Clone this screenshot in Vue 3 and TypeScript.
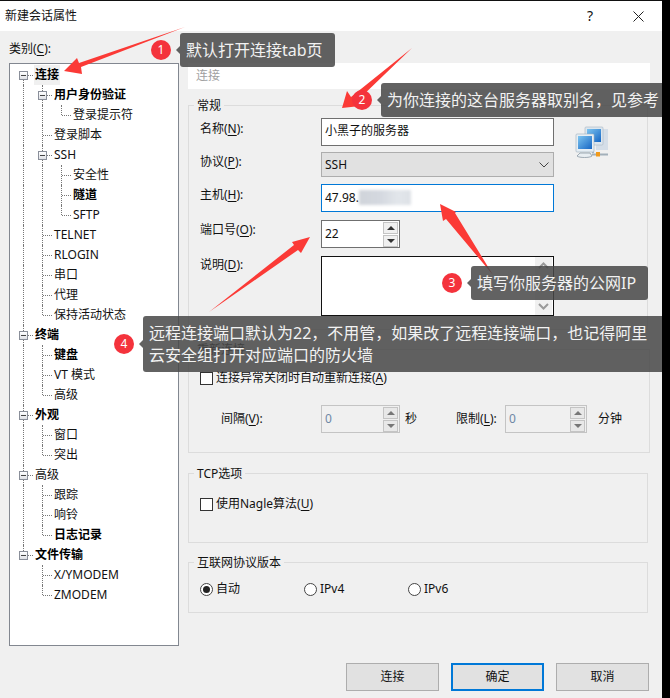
<script setup lang="ts">
interface TreeItem { label: string; level: number; bold?: boolean; open?: boolean; selected?: boolean }

const items: TreeItem[] = [
  { label: '连接', level: 0, bold: true, open: true, selected: true },
  { label: '用户身份验证', level: 1, bold: true, open: true },
  { label: '登录提示符', level: 2 },
  { label: '登录脚本', level: 1 },
  { label: 'SSH', level: 1, open: true },
  { label: '安全性', level: 2 },
  { label: '隧道', level: 2, bold: true },
  { label: 'SFTP', level: 2 },
  { label: 'TELNET', level: 1 },
  { label: 'RLOGIN', level: 1 },
  { label: '串口', level: 1 },
  { label: '代理', level: 1 },
  { label: '保持活动状态', level: 1 },
  { label: '终端', level: 0, bold: true, open: true },
  { label: '键盘', level: 1, bold: true },
  { label: 'VT 模式', level: 1 },
  { label: '高级', level: 1 },
  { label: '外观', level: 0, bold: true, open: true },
  { label: '窗口', level: 1 },
  { label: '突出', level: 1 },
  { label: '高级', level: 0, open: true },
  { label: '跟踪', level: 1 },
  { label: '响铃', level: 1 },
  { label: '日志记录', level: 1, bold: true },
  { label: '文件传输', level: 0, bold: true, open: true },
  { label: 'X/YMODEM', level: 1 },
  { label: 'ZMODEM', level: 1 },
]

// Is there a later sibling at this level, before the branch closes?
function hasNext(index: number, level: number): boolean {
  for (let i = index + 1; i < items.length; i++) {
    if (items[i].level < level) return false
    if (items[i].level === level) return true
  }
  return false
}

function cells(index: number) {
  const item = items[index]
  const out: { cls: string; exp: boolean }[] = []
  for (let l = 0; l <= item.level; l++) {
    if (l < item.level) {
      out.push({ cls: hasNext(index, l) ? 'pass' : 'none', exp: false })
    } else if (l === 0) {
      out.push({ cls: index === 0 ? 'rootfirst' : hasNext(index, 0) ? 'branch' : 'last', exp: !!item.open })
    } else {
      out.push({ cls: hasNext(index, l) ? 'branch' : 'last', exp: !!item.open })
    }
  }
  return out
}
</script>

<template>
  <div class="window">
    <header class="titlebar">
      <span class="title">新建会话属性</span>
      <span class="help">?</span>
      <svg class="close" width="11" height="11" viewBox="0 0 11 11">
        <path d="M.5.5l10 10M10.5.5l-10 10" stroke="#222" stroke-width="1" fill="none" />
      </svg>
    </header>

    <div class="body">
      <aside class="left">
        <div class="cat">类别(<u>C</u>):</div>
        <div class="tree">
          <div v-for="(item, i) in items" :key="i" class="row">
            <span v-for="(c, j) in cells(i)" :key="j" class="cell" :class="c.cls">
              <i v-if="c.exp" class="exp"></i>
            </span>
            <span class="node" :class="{ b: item.bold, sel: item.selected }">{{ item.label }}</span>
          </div>
        </div>
      </aside>

      <main class="right">
        <div class="band">连接</div>

        <fieldset class="g g1">
          <legend>常规</legend>
          <div class="form">
            <label class="lb">名称(<u>N</u>):</label>
            <div class="ctl text">小黑子的服务器</div>
            <svg class="netico" width="36" height="36" viewBox="0 0 36 36">
              <defs>
                <linearGradient id="scr" x1="0" y1="0" x2="1" y2="1">
                  <stop offset="0" stop-color="#7cc4f0" />
                  <stop offset="1" stop-color="#1666c4" />
                </linearGradient>
              </defs>
              <rect x="21" y="3" width="12" height="21" fill="#d5dee8" />
              <rect x="10" y="1" width="18" height="18" rx="1" fill="#dce6ee" stroke="#a9b7c4" stroke-width=".6" />
              <rect x="12" y="3" width="14" height="13" fill="url(#scr)" />
              <path d="M18 19l0 8" stroke="#a9b7c4" stroke-width="2" />
              <rect x="1" y="8" width="18" height="18" rx="1" fill="#e6eef4" stroke="#9fb0be" stroke-width=".6" />
              <rect x="3" y="10" width="14" height="13" fill="url(#scr)" />
              <path d="M5 27h10l2 3c-2 2-13 2-15 0z" fill="#e8eef2" stroke="#8b99a5" stroke-width=".8" />
              <path d="M17 28.500h16" stroke="#a3b0ba" stroke-width="2" />
              <rect x="21" y="26" width="4" height="4.500" fill="#f09a1c" />
            </svg>

            <label class="lb up">协议(<u>P</u>):</label>
            <div class="ctl combo">
              <span>SSH</span>
              <svg width="10" height="6" viewBox="0 0 10 6"><path d="M.5.500L5 5l4.500-4.500" stroke="#444" fill="none" /></svg>
            </div>

            <label class="lb down">主机(<u>H</u>):</label>
            <div class="ctl text focus">47.98.<span class="mask"></span></div>

            <label class="lb up">端口号(<u>O</u>):</label>
            <div class="spin port">
              <span class="val">22</span>
              <span class="arrows">
                <b><i class="tu"></i></b>
                <b><i class="td"></i></b>
              </span>
            </div>

            <label class="lb desc">说明(<u>D</u>):</label>
            <div class="ctl area">
              <div class="sb">
                <svg width="11" height="7" viewBox="0 0 11 7"><path d="M1 6l4.500-4.500L10 6" stroke="#9a9a9a" stroke-width="2" fill="none" /></svg>
                <svg width="11" height="7" viewBox="0 0 11 7"><path d="M1 1l4.500 4.500L10 1" stroke="#9a9a9a" stroke-width="2" fill="none" /></svg>
              </div>
            </div>
          </div>
        </fieldset>

        <fieldset class="g g2">
          <legend>重新连接</legend>
          <div class="check first"><i class="box"></i><span>连接异常关闭时自动重新连接(<u>A</u>)</span></div>
          <div class="interval">
            <label class="il">间隔(<u>V</u>):</label>
            <div class="spin off">
              <span class="val">0</span>
              <span class="arrows"><b><i class="tu"></i></b><b><i class="td"></i></b></span>
            </div>
            <span class="unit">秒</span>
            <label class="lim">限制(<u>L</u>):</label>
            <div class="spin off wide">
              <span class="val">0</span>
              <span class="arrows"><b><i class="tu"></i></b><b><i class="td"></i></b></span>
            </div>
            <span class="unit u2">分钟</span>
          </div>
        </fieldset>

        <fieldset class="g g3">
          <legend>TCP选项</legend>
          <div class="check"><i class="box"></i><span>使用Nagle算法(<u>U</u>)</span></div>
        </fieldset>

        <fieldset class="g g4">
          <legend>互联网协议版本</legend>
          <div class="radios">
            <div class="radio"><i class="dot on"></i><span>自动</span></div>
            <div class="radio"><i class="dot"></i><span>IPv4</span></div>
            <div class="radio"><i class="dot"></i><span>IPv6</span></div>
          </div>
        </fieldset>

        <footer class="foot">
          <button class="btn">连接</button>
          <button class="btn primary">确定</button>
          <button class="btn">取消</button>
        </footer>
      </main>
    </div>

    <svg class="arrows-layer" width="662" height="698" viewBox="0 0 662 698">
      <g fill="#fb3a36">
        <polygon points="185,27 79,63 77,58 64,71 82,74 81,67" />
        <polygon points="412,48 351,97 347,91 342,108 360,106 357,101" />
        <polygon points="493,275 455,213 456,212 440,204 443,221 446,219" />
        <polygon points="209,312 294,245 292,242 310,237 301,253 298,250" />
      </g>
    </svg>

    <div class="note n1"><span class="num">1</span><div class="tip">默认打开连接tab页</div></div>
    <div class="note n2"><span class="num">2</span><div class="tip">为你连接的这台服务器取别名，见参考</div></div>
    <div class="note n3"><span class="num">3</span><div class="tip">填写你服务器的公网IP</div></div>
    <div class="note n4">
      <span class="num">4</span>
      <div class="tip">远程连接端口默认为22，不用管，如果改了远程连接端口，也记得阿里<br />云安全组打开对应端口的防火墙</div>
    </div>
  </div>
</template>

<style>
html, body { margin: 0; background: #000; overflow: hidden; }
</style>

<style scoped>
.window {
  position: relative;
  width: 662px;
  height: 698px;
  overflow: hidden;
  background: #f0f0f0;
  color: #111;
  font: 12px/20px "Noto Sans", "Noto Sans CJK SC", sans-serif;
}
u { text-underline-offset: 2px; }
i { display: block; font-style: normal; }

.titlebar {
  display: flex;
  align-items: center;
  height: 30px;
  padding-left: 5px;
  background: #fff;
  border-top: 1px solid #111;
}
.title { flex: 1; }
.help { font-size: 14px; margin-right: 40px; }
.close { margin-right: 18px; }

.body {
  display: grid;
  grid-template-columns: 170px 462px;
  column-gap: 9px;
  padding: 8px 0 0 9px;
}
.cat { height: 20px; margin-bottom: 4px; }
.tree {
  box-sizing: border-box;
  height: 583px;
  padding-top: 1px;
  background: #fff;
  border: 1px solid #828790;
}
.row { display: flex; height: 20px; }
.cell { position: relative; flex: none; width: 19px; height: 20px; }
.cell::before, .cell::after { content: ""; position: absolute; }
.pass::before, .branch::before { left: 13px; top: 0; height: 20px; border-left: 1px dotted #777; }
.rootfirst::before { left: 13px; top: 10px; height: 10px; border-left: 1px dotted #777; }
.last::before { left: 13px; top: 0; height: 10px; border-left: 1px dotted #777; }
.branch::after, .last::after, .rootfirst::after {
  left: 14px; top: 10px; width: 9px; border-top: 1px dotted #777;
}
.none::before { display: none; }
.exp {
  position: absolute;
  z-index: 1;
  left: 9px;
  top: 6px;
  box-sizing: border-box;
  width: 9px;
  height: 9px;
  border: 1px solid #8a8f9a;
  background: linear-gradient(#fff, #dfe1e6);
}
.exp::after {
  content: "";
  position: absolute;
  left: 1px;
  top: 3px;
  width: 5px;
  height: 1px;
  background: #444;
}
.node { margin-left: 5px; padding: 0 1px; height: 20px; white-space: nowrap; }
.b { font-weight: 700; color: #000; }
.sel { background: #f0f0f0; }

.right { margin-top: 24px; }
.band {
  box-sizing: border-box;
  height: 26px;
  padding-left: 8px;
  line-height: 26px;
  background: #fff;
  color: #a0a0a0;
  margin-bottom: 6px;
}

.g {
  box-sizing: border-box;
  width: 460px;
  margin: 0;
  padding: 0;
  border: 1px solid #dcdcdc;
}
.g legend { margin-left: 5px; padding: 0 3px; line-height: 22px; height: 20px; }
.g1 { height: 235px; margin-bottom: 9px; }
.g2 { height: 114px; margin-bottom: 10px; }
.g3 { height: 80px; margin-bottom: 9px; }
.g4 { height: 61px; }

.form {
  display: grid;
  grid-template-columns: 132px 233px 1fr;
  grid-template-rows: 34px 32px 36px 36px 60px;
  align-items: start;
  padding-top: 3px;
}
.lb { grid-column: 1; padding-left: 11px; margin-top: 1px; }
.up { margin-top: 0; }
.down { margin-top: 1px; }
.desc { margin-top: -1px; }

.ctl { box-sizing: border-box; grid-column: 2; }
.text {
  height: 28px;
  padding: 0 3px;
  line-height: 24px;
  background: #fff;
  border: 1px solid #6f6f6f;
}
.focus { border-color: #0078d7; display: flex; align-items: center; }
.mask {
  display: block;
  width: 52px;
  height: 15px;
  margin-top: -2px;
  background: linear-gradient(90deg, #d0d4da, #d4d8df 40%, #e2e6eb 75%, #dde1e6);
  filter: blur(1.5px);
}
.netico { grid-column: 3; grid-row: 1 / span 2; margin: 8px 0 0 21px; }
.combo {
  height: 25px;
  display: flex;
  align-items: center;
  justify-content: space-between;
  padding: 0 4px 0 3px;
  background: #e1e1e1;
  border: 1px solid #adadad;
}
.area {
  position: relative;
  height: 60px;
  background: #fff;
  border: 1px solid #111;
}
.sb {
  position: absolute;
  right: 1px;
  top: 0;
  bottom: 0;
  width: 17px;
  display: flex;
  flex-direction: column;
  align-items: center;
  justify-content: space-between;
  padding: 5px 0;
  box-sizing: border-box;
  background: #f0f0f0;
}

.spin {
  box-sizing: border-box;
  display: flex;
  justify-content: space-between;
  align-items: center;
  width: 79px;
  height: 28px;
  padding-left: 3px;
  background: #fff;
  border: 1px solid #6f6f6f;
}
.port { grid-column: 2; }
.off { background: #f0f0f0; border-color: #c4c4c4; color: #6f87a5; flex: none; }
.wide { width: 82px; }
.arrows { display: flex; flex-direction: column; gap: 1px; margin-right: 1px; }
.arrows b {
  display: flex;
  align-items: center;
  justify-content: center;
  box-sizing: border-box;
  width: 15px;
  height: 12px;
  background: #f0f0f0;
  border: 1px solid #c4c4c4;
}
.off .arrows b { background: #e8e8e8; }
.tu, .td { width: 0; height: 0; border-left: 4px solid transparent; border-right: 4px solid transparent; }
.tu { border-bottom: 4px solid #333; }
.td { border-top: 4px solid #333; }
.off .tu { border-bottom-color: #777; }
.off .td { border-top-color: #777; }

.check {
  display: flex;
  align-items: center;
  gap: 3px;
  margin: 11px 0 0 11px;
}
.check.first { margin-top: 9px; }
.box {
  box-sizing: border-box;
  width: 13px;
  height: 13px;
  background: #fff;
  border: 1px solid #333;
}
.interval {
  display: flex;
  align-items: center;
  margin: 17px 0 0 32px;
}
.il { width: 100px; flex: none; }
.unit { margin-left: 5px; width: 51px; flex: none; }
.lim { width: 49px; flex: none; }
.u2 { margin-left: 11px; }

.radios { display: flex; margin: 0 0 0 11px; padding-top: 7px; }
.radio { display: flex; align-items: center; gap: 3px; width: 104px; }
.dot {
  position: relative;
  box-sizing: border-box;
  width: 13px;
  height: 13px;
  background: #fff;
  border: 1px solid #444;
  border-radius: 50%;
}
.on::after {
  content: "";
  position: absolute;
  left: 2px;
  top: 2px;
  width: 7px;
  height: 7px;
  border-radius: 50%;
  background: #222;
}

.foot {
  display: flex;
  justify-content: flex-end;
  gap: 12px;
  margin: 50px 1px 0 0;
}
.btn {
  box-sizing: border-box;
  width: 93px;
  height: 28px;
  padding: 0;
  font: inherit;
  color: #111;
  background: #e1e1e1;
  border: 1px solid #adadad;
}
.primary { border: 2px solid #0078d7; }

.arrows-layer { position: absolute; left: 0; top: 0; pointer-events: none; }

.note { position: absolute; display: flex; align-items: center; }
.n1 { left: 151px; top: 33px; }
.n2 { left: 352px; top: 83px; }
.n3 { left: 442px; top: 266px; }
.n4 { left: 114px; top: 316px; }
.num {
  flex: none;
  width: 20px;
  height: 20px;
  margin-right: 9px;
  border-radius: 50%;
  background: #f4333c;
  color: #fff;
  font-size: 12px;
  line-height: 20px;
  text-align: center;
}
.tip {
  position: relative;
  box-sizing: border-box;
  padding: 6px;
  border-radius: 3px;
  background: rgba(72, 72, 72, 0.86);
  color: #f2f2f2;
  font-size: 16px;
  line-height: 22px;
  white-space: nowrap;
}
.tip::before {
  content: "";
  position: absolute;
  left: -4px;
  top: 50%;
  margin-top: -4px;
  border-top: 4px solid transparent;
  border-bottom: 4px solid transparent;
  border-right: 4px solid rgba(72, 72, 72, 0.86);
}
.n1 .tip { width: 155px; }
.n2 .tip { width: 300px; }
.n3 .tip { width: 177px; }
.n4 .tip { width: 530px; }
</style>
